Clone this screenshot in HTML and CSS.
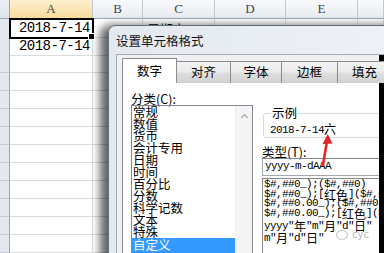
FILE: index.html
```html
<!DOCTYPE html>
<html>
<head>
<meta charset="utf-8">
<link rel="stylesheet" href="styles.css">
</head>
<body>
<div class="sheet">
  <div class="row head">
    <div class="rh corner"></div>
    <div class="c ch sel">A</div><div class="c ch">B</div><div class="c ch">C</div><div class="c ch">D</div><div class="c ch">E</div><div class="c ch"></div>
  </div>
  <div class="row">
    <div class="rh"></div>
    <div class="c num active">2018-7-14<span class="handle"></span></div>
    <div class="c"></div><div class="c txt">星期六</div><div class="c"></div><div class="c"></div><div class="c"></div>
  </div>
  <div class="row">
    <div class="rh"></div>
    <div class="c num">2018-7-14</div>
    <div class="c"></div><div class="c"></div><div class="c"></div><div class="c"></div><div class="c"></div>
  </div>
  <div class="row"><div class="rh"></div><div class="c"></div><div class="c"></div><div class="c"></div><div class="c"></div><div class="c"></div><div class="c"></div></div>
  <div class="row"><div class="rh"></div><div class="c"></div><div class="c"></div><div class="c"></div><div class="c"></div><div class="c"></div><div class="c"></div></div>
  <div class="row"><div class="rh"></div><div class="c"></div><div class="c"></div><div class="c"></div><div class="c"></div><div class="c"></div><div class="c"></div></div>
  <div class="row"><div class="rh"></div><div class="c"></div><div class="c"></div><div class="c"></div><div class="c"></div><div class="c"></div><div class="c"></div></div>
  <div class="row"><div class="rh"></div><div class="c"></div><div class="c"></div><div class="c"></div><div class="c"></div><div class="c"></div><div class="c"></div></div>
  <div class="row"><div class="rh"></div><div class="c"></div><div class="c"></div><div class="c"></div><div class="c"></div><div class="c"></div><div class="c"></div></div>
  <div class="row"><div class="rh"></div><div class="c"></div><div class="c"></div><div class="c"></div><div class="c"></div><div class="c"></div><div class="c"></div></div>
  <div class="row"><div class="rh"></div><div class="c"></div><div class="c"></div><div class="c"></div><div class="c"></div><div class="c"></div><div class="c"></div></div>
  <div class="row"><div class="rh"></div><div class="c"></div><div class="c"></div><div class="c"></div><div class="c"></div><div class="c"></div><div class="c"></div></div>
  <div class="row"><div class="rh"></div><div class="c"></div><div class="c"></div><div class="c"></div><div class="c"></div><div class="c"></div><div class="c"></div></div>
  <div class="row"><div class="rh"></div><div class="c"></div><div class="c"></div><div class="c"></div><div class="c"></div><div class="c"></div><div class="c"></div></div>
</div>

<div class="dialog">
  <div class="title">设置单元格格式</div>
  <div class="client">
    <div class="tabs">
      <div class="tab on">数字</div>
      <div class="tab">对齐</div>
      <div class="tab">字体</div>
      <div class="tab">边框</div>
      <div class="tab">填充</div>
    </div>
    <div class="pane">
      <div class="left">
        <div class="label">分类(<u>C</u>):</div>
        <div class="listbox">
          <div class="items">
            <div class="item">常规</div>
            <div class="item">数值</div>
            <div class="item">货币</div>
            <div class="item">会计专用</div>
            <div class="item">日期</div>
            <div class="item">时间</div>
            <div class="item">百分比</div>
            <div class="item">分数</div>
            <div class="item">科学记数</div>
            <div class="item">文本</div>
            <div class="item">特殊</div>
            <div class="item picked">自定义</div>
          </div>
          <div class="scroll"><span class="up"></span></div>
        </div>
      </div>
      <div class="right">
        <fieldset class="sample">
          <legend>示例</legend>
          <div class="sample-text">2018-7-14<span class="cjk">六</span></div>
        </fieldset>
        <div class="label type-label">类型(<u>T</u>):</div>
        <div class="input">yyyy-m-dAAA</div>
        <div class="fmtlist">
          <div class="fmt">$#,##0_);($#,##0)</div>
          <div class="fmt">$#,##0_);[<span class="cjk">红色</span>]($#,##0)</div>
          <div class="fmt">$#,##0.00_);($#,##0.00)</div>
          <div class="fmt">$#,##0.00_);[<span class="cjk">红色</span>]($#,##0.00)</div>
          <div class="fmt tall first">yyyy"<span class="cjk">年</span>"m"<span class="cjk">月</span>"d"<span class="cjk">日</span>"</div>
          <div class="fmt tall">m"<span class="cjk">月</span>"d"<span class="cjk">日</span>"</div>
        </div>
      </div>
    </div>
  </div>
</div>

<svg class="arrow" width="22" height="34" viewBox="0 0 22 34">
  <line x1="8" y1="32" x2="12" y2="8" stroke="#e3262b" stroke-width="2.6" stroke-linecap="round"/>
  <polygon points="12.8,1 7.5,11 17.5,10.5" fill="#e3262b"/>
</svg>

<div class="watermark"><span class="wm-icon"></span>cyc</div>
<div class="edge"></div>
</body>
</html>
```

FILE: styles.css
```css
html, body {
  margin: 0;
  padding: 0;
  width: 384px;
  height: 253px;
  overflow: hidden;
  background: #ffffff;
}

body {
  position: relative;
  font-family: "Noto Sans CJK SC", "Noto Sans", sans-serif;
  color: #000;
}

/* ---------- spreadsheet ---------- */
.sheet {
  display: flex;
  flex-direction: column;
}

.row {
  display: grid;
  grid-template-columns: 10px 83px 50px 72px 71px 72px 26px;
  height: 18px;
  flex-shrink: 0;
}

.row.head {
  height: 19px;
}

.c {
  box-sizing: border-box;
  border-right: 1px solid #d9dbdd;
  border-bottom: 1px solid #d9dbdd;
  position: relative;
}

.rh {
  box-sizing: border-box;
  background: #e4e8ee;
  border-right: 1px solid #9aa4b0;
  border-bottom: 1px solid #c5ccd5;
}

.head .c {
  background: linear-gradient(#f9fafc, #e6eaef);
  border-right: 1px solid #c3c9d1;
  border-bottom: 1px solid #9eaab8;
  font-family: "Liberation Serif", serif;
  font-size: 13px;
  line-height: 18px;
  color: #3f4650;
  text-align: center;
}

.head .corner {
  background: linear-gradient(#eef1f4, #dfe4ea);
  border-bottom: 1px solid #9eaab8;
}

.head .c.sel {
  background: linear-gradient(#fdf0cf, #f8da9c);
  border-bottom: 1px solid #e9a94a;
}

.num {
  font-family: "Liberation Mono", monospace;
  font-size: 14px;
  letter-spacing: -0.5px;
  line-height: 18px;
  text-align: right;
  padding-right: 2px;
  color: #000;
}

.txt {
  font-size: 13px;
  line-height: 13px;
  padding-left: 4px;
  padding-top: 3px;
}

.active {
  outline: 2px solid #000;
  outline-offset: -1px;
  z-index: 1;
}

.handle {
  position: absolute;
  right: -3px;
  bottom: -3px;
  width: 5px;
  height: 5px;
  background: #000;
  border: 1px solid #fff;
}

/* ---------- dialog ---------- */
.dialog {
  position: absolute;
  left: 108px;
  top: 25px;
  width: 300px;
  height: 260px;
  box-sizing: border-box;
  background: linear-gradient(90deg, #e3e9ef, #eef2f6);
  border: 1px solid #5f6b78;
  border-right: none;
  border-radius: 7px 0 0 0;
  box-shadow: -5px 3px 8px 3px rgba(0, 0, 0, 0.6);
  padding-left: 7px;
  display: flex;
  flex-direction: column;
}

.title {
  flex-shrink: 0;
  height: 28px;
  display: flex;
  align-items: center;
  font-size: 12.5px;
  color: #111;
  padding-top: 1px;
  box-sizing: border-box;
}

.client {
  flex: 1;
  background: #f0f0f0;
  border-top: 1px solid #a5adb6;
  border-left: 1px solid #a5adb6;
  padding: 3px 0 0 5px;
  display: flex;
  flex-direction: column;
  min-width: 0;
  min-height: 0;
}

.tabs {
  flex-shrink: 0;
  display: flex;
  align-items: flex-end;
  height: 25px;
  position: relative;
  z-index: 2;
}

.tab {
  box-sizing: border-box;
  flex-shrink: 0;
  height: 22px;
  width: 55px;
  margin-right: -1px;
  border: 1px solid #898c95;
  border-bottom: none;
  background: linear-gradient(#f3f3f3, #ebebeb 48%, #dedede 52%, #d2d2d2);
  font-size: 12.5px;
  line-height: 20px;
  text-align: center;
  color: #000;
}

.tab:nth-child(3) { width: 52px; }
.tab:nth-child(4) { width: 57px; }

.tab.on {
  height: 25px;
  background: #ffffff;
  line-height: 23px;
}

.pane {
  flex: 1;
  margin-top: -1px;
  background: #ffffff;
  border-top: 1px solid #898c95;
  border-left: 1px solid #898c95;
  display: flex;
  padding: 9px 0 0 8px;
  min-width: 0;
  min-height: 0;
}

.left {
  width: 122px;
  flex-shrink: 0;
  display: flex;
  flex-direction: column;
}

.label {
  flex-shrink: 0;
  font-size: 12.5px;
  line-height: 13px;
  height: 13px;
  color: #000;
}

.label u {
  text-decoration-thickness: 1px;
  text-underline-offset: 1px;
}

.listbox {
  flex-shrink: 0;
  box-sizing: border-box;
  height: 170px;
  border: 1px solid #828790;
  display: flex;
}

.items {
  width: 103px;
}

.item {
  font-size: 12.5px;
  line-height: 12px;
  height: 12px;
  padding-left: 1px;
  white-space: nowrap;
  color: #000;
}

.item.picked {
  background: #3399ff;
  color: #fff;
  height: 16px;
  line-height: 13px;
}

.scroll {
  flex: 1;
  background: #f4f4f4;
  border-left: 1px solid #ededed;
  display: flex;
  justify-content: center;
  padding-top: 9px;
}

.up {
  width: 4px;
  height: 4px;
  border-left: 1.5px solid #9a9a9a;
  border-top: 1.5px solid #9a9a9a;
  transform: rotate(45deg);
}

.right {
  margin-left: 9px;
  padding-top: 15px;
  flex: 1;
  min-width: 0;
  display: flex;
  flex-direction: column;
}

.sample {
  flex-shrink: 0;
  margin: 0 0 0 1px;
  padding: 0 0 0 6px;
  height: 31px;
  box-sizing: border-box;
  border: 1px solid #d3dde4;
  border-radius: 3px;
  min-width: 0;
}

.sample legend {
  font-size: 12.5px;
  line-height: 12px;
  padding: 0 1px;
  margin-left: 1px;
}

.sample-text {
  font-family: "Liberation Mono", monospace;
  font-size: 11px;
  letter-spacing: -0.6px;
  line-height: 12px;
  padding-top: 5px;
  color: #000;
}

.cjk {
  font-family: "Noto Sans CJK SC", sans-serif;
  font-size: 12px;
  letter-spacing: 0;
  line-height: 10px;
  vertical-align: top;
}

.type-label {
  margin-top: 7px;
}

.input {
  flex-shrink: 0;
  margin-top: 0;
  height: 18px;
  box-sizing: border-box;
  border: 1px solid #a4a8b0;
  border-top-color: #7e838c;
  padding-left: 2px;
  font-family: "Liberation Mono", monospace;
  font-size: 11px;
  letter-spacing: -0.6px;
  line-height: 15px;
  white-space: nowrap;
}

.fmtlist {
  flex-shrink: 0;
  margin-top: 2px;
  height: 90px;
  box-sizing: border-box;
  border: 1px solid #828790;
  padding: 1px 0 0 1px;
  overflow: hidden;
}

.fmt {
  font-family: "Liberation Mono", monospace;
  font-size: 11px;
  letter-spacing: -0.6px;
  line-height: 9.5px;
  height: 9.5px;
  white-space: nowrap;
  color: #000;
}

.fmt.tall {
  line-height: 12px;
  height: 12px;
}

.fmt.tall .cjk {
  line-height: 12px;
}

.fmt.first {
  margin-top: 2px;
}

/* ---------- overlays ---------- */
.arrow {
  position: absolute;
  left: 315px;
  top: 133px;
}

.watermark {
  position: absolute;
  left: 336px;
  top: 229px;
  font-family: "DejaVu Sans", sans-serif;
  font-size: 10px;
  color: rgba(150, 150, 150, 0.7);
  display: flex;
  align-items: center;
  gap: 4px;
}

.wm-icon {
  width: 10px;
  height: 8px;
  border: 1px solid rgba(160, 160, 160, 0.6);
  border-radius: 50%;
}

.edge {
  position: absolute;
  right: 0;
  top: 55px;
  bottom: 0;
  width: 5px;
  background: #000;
}
```
